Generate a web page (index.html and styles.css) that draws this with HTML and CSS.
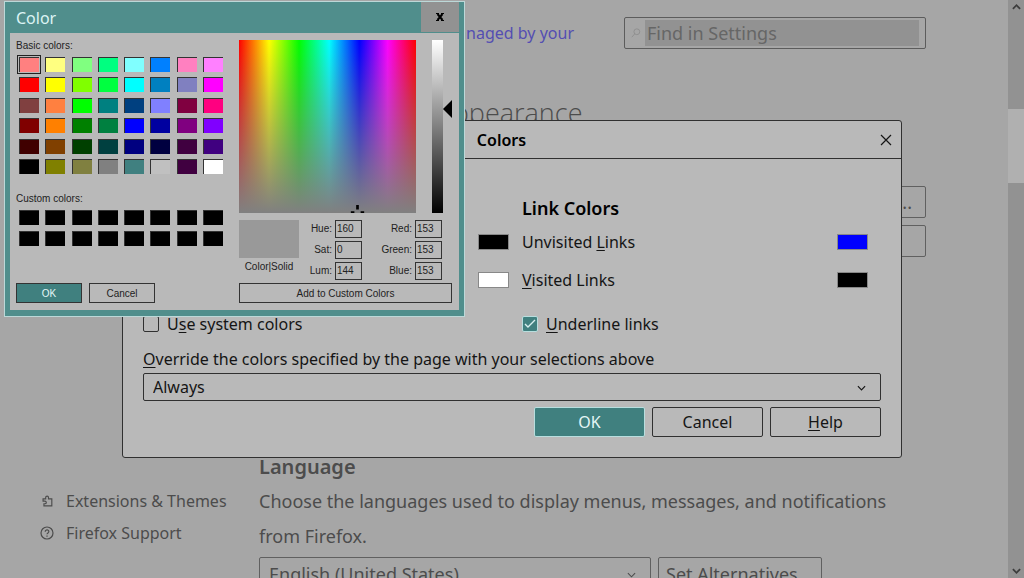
FILE: index.html
```
<!DOCTYPE html>
<html lang="en">
<head>
<meta charset="utf-8">
<title>Settings</title>
<link rel="stylesheet" href="styles.css">
</head>
<body>
<div class="page">
  <nav class="sidebar">
    <a class="nav-link" href="#extensions">
      <svg class="nav-icon" viewBox="0 0 16 16" fill="none" stroke="currentColor" stroke-width="1.3"><path d="M3.500 5.500h3V4a1.600 1.600 0 0 1 3.200 0v1.500h3.800v8H4.500v-2.300h1.200a1.500 1.500 0 0 0 0-3H3.500z"/></svg>
      Extensions &amp; Themes
    </a>
    <a class="nav-link" href="#support">
      <svg class="nav-icon" viewBox="0 0 14 14" fill="none" stroke="currentColor" stroke-width="1.2"><circle cx="7" cy="7" r="6"/><path d="M5.200 5.800c0-2.600 3.800-2.400 3.600-.1-.1 1.300-1.800 1.200-1.800 2.600M7 9.500v1.200"/></svg>
      Firefox Support
    </a>
  </nav>
  <main class="content">
    <div class="top-row">
      <a class="managed" href="#managed">managed by your</a>
      <label class="search">
        <svg class="search-icon" viewBox="0 0 12 12" fill="none" stroke="currentColor"><circle cx="7" cy="4.500" r="3.500"/><path d="M4.500 7 1 11"/></svg>
        <input class="search-input" type="text" placeholder="Find in Settings" aria-label="Find in Settings">
      </label>
    </div>
    <h1 class="page-title">Language and Appearance</h1>
    <div class="side-buttons">
      <button class="flat side-button" type="button">...</button>
      <button class="flat side-button" type="button" aria-label="Manage"></button>
    </div>
    <section class="language">
      <h2 class="language-title">Language</h2>
      <p class="language-text">Choose the languages used to display menus, messages, and notifications from Firefox.</p>
      <div class="language-row">
        <div class="select-wrap language-select">
          <select class="flat select" aria-label="Language"><option>English (United States)</option></select>
          <svg class="chevron" viewBox="0 0 10 6" fill="none" stroke="currentColor" stroke-width="1.2"><path d="m1 1 4 4 4-4"/></svg>
        </div>
        <button class="flat alternatives" type="button">Set Alternatives</button>
      </div>
    </section>
  </main>
  <div class="scrollbar">
    <svg class="scroll-arrow" viewBox="0 0 10 8" fill="none" stroke="currentColor" stroke-width="2"><path d="m1 6 4-4 4 4"/></svg>
    <div class="scroll-track"><div class="scroll-thumb"></div></div>
    <svg class="scroll-arrow" viewBox="0 0 10 8" fill="none" stroke="currentColor" stroke-width="2"><path d="m1 2 4 4 4-4"/></svg>
  </div>
</div>

<div class="overlay">
  <section class="dialog" role="dialog" aria-labelledby="dialog-title">
    <header class="dialog-header">
      <h2 class="dialog-title" id="dialog-title">Colors</h2>
      <button class="dialog-close" type="button" aria-label="Close"><svg viewBox="0 0 12 12" fill="none" stroke="currentColor" stroke-width="1.200"><path d="m1 1 10 10M11 1 1 11"/></svg></button>
    </header>
    <div class="dialog-body">
      <div class="groups">
        <div class="group">
          <div class="group-title"></div>
          <div class="color-row end"><input class="well" type="color" value="#000000" aria-label="Text"></div>
          <div class="color-row end"><input class="well" type="color" value="#ffffff" aria-label="Background"></div>
          <label class="check-row"><input class="check" type="checkbox"><span>U<u>s</u>e system colors</span></label>
        </div>
        <div class="group">
          <h3 class="group-title">Link Colors</h3>
          <div class="color-row"><label for="unvisited">Unvisited <u>L</u>inks</label><input class="well" id="unvisited" type="color" value="#0000ff"></div>
          <div class="color-row"><label for="visited"><u>V</u>isited Links</label><input class="well" id="visited" type="color" value="#000000"></div>
          <label class="check-row"><input class="check" type="checkbox" checked><span><u>U</u>nderline links</span></label>
        </div>
      </div>
      <label class="override" for="override"><u>O</u>verride the colors specified by the page with your selections above</label>
      <div class="select-wrap">
        <select class="flat select dialog-select" id="override"><option>Always</option></select>
        <svg class="chevron" viewBox="0 0 10 6" fill="none" stroke="currentColor" stroke-width="1.300"><path d="m1 1 4 4 4-4"/></svg>
      </div>
      <div class="actions">
        <button class="flat action primary" type="button">OK</button>
        <button class="flat action" type="button">Cancel</button>
        <button class="flat action" type="button"><u>H</u>elp</button>
      </div>
    </div>
  </section>
</div>

<section class="picker" role="dialog" aria-labelledby="picker-title">
  <header class="picker-header">
    <h2 class="picker-title" id="picker-title">Color</h2>
    <button class="picker-close" type="button" aria-label="Close"><svg viewBox="0 0 8 8" fill="none" stroke="currentColor"><path stroke-width="2" d="m1.500 1 5 6M6.500 1l-5 6"/><path d="M0 .5h3M5 .5h3M0 7.500h3M5 7.500h3"/></svg></button>
  </header>
  <div class="picker-body">
    <div class="palette">
      <div class="palette-label">Basic colors:</div>
      <div class="swatches basic" id="basic"></div>
      <div class="palette-label custom-label">Custom colors:</div>
      <div class="swatches custom" id="custom"></div>
      <div class="palette-actions">
        <button class="small-button small-primary" type="button">OK</button>
        <button class="small-button" type="button">Cancel</button>
      </div>
    </div>
    <div class="mixer">
      <div class="mixer-top">
        <div class="spectrum"><svg class="cross" viewBox="0 0 15 9" fill="currentColor"><path d="M6 0h3v5H6zM0 7h4v2H0zM11 7h4v2h-4z"/></svg></div>
        <div class="luminance"></div>
        <svg class="lum-arrow" viewBox="0 0 9 18"><path d="M9 0v18L0 9z"/></svg>
      </div>
      <div class="mixer-values">
        <div class="preview"><div class="preview-color"></div><span>Color|Solid</span></div>
        <div class="fields">
          <label for="hue">Hue:</label><input id="hue" type="text" value="160">
          <label for="sat">Sat:</label><input id="sat" type="text" value="0">
          <label for="lum">Lum:</label><input id="lum" type="text" value="144">
        </div>
        <div class="fields rgb">
          <label for="red">Red:</label><input id="red" type="text" value="153">
          <label for="green">Green:</label><input id="green" type="text" value="153">
          <label for="blue">Blue:</label><input id="blue" type="text" value="153">
        </div>
      </div>
      <button class="small-button" type="button">Add to Custom Colors</button>
    </div>
  </div>
</section>
<script src="palette.js"></script>
</body>
</html>
```

FILE: styles.css
```
* { box-sizing: border-box; }
body {
  margin: 0;
  background: #a6a6a6;
  color: #4c4c4c;
  font-family: "Noto Sans", "Open Sans", sans-serif;
  font-size: 16px;
  overflow: hidden;
}
h1, h2, h3, p { margin: 0; }
svg { display: block; }
button, input, select { font: inherit; color: inherit; }
u { text-underline-offset: 2px; text-decoration-thickness: 1px; }

.page { display: flex; height: 100vh; overflow: hidden; }
.sidebar {
  width: 259px;
  flex: none;
  display: flex;
  flex-direction: column;
  justify-content: flex-end;
  gap: 8px;
  padding: 0 0 33px 40px;
}
.nav-link {
  display: flex;
  align-items: center;
  gap: 12px;
  line-height: 24px;
  color: inherit;
  text-decoration: none;
  white-space: nowrap;
}
.nav-icon { width: 14px; height: 14px; }
.content { flex: 1; min-width: 0; padding: 17px 82px 0 0; }
.top-row { display: flex; justify-content: space-between; }
.managed {
  width: 315px;
  text-align: right;
  line-height: 32px;
  color: #544eb2;
  text-decoration: none;
}
.search {
  width: 302px;
  height: 32px;
  display: flex;
  align-items: center;
  gap: 4px;
  padding: 2px 6px;
  border: 1px solid #5c5c5c;
  border-radius: 2px;
}
.search-icon { width: 10px; height: 12px; color: #8c8c8c; }
.search-input {
  flex: 1;
  min-width: 0;
  height: 26px;
  padding: 0 2px;
  border: 0;
  background: #929292;
  font-size: 18px;
}
.search-input::placeholder { color: #666; opacity: 1; }
.page-title {
  margin-top: 42px;
  font-family: "Open Sans", sans-serif;
  font-size: 27px;
  line-height: 44px;
  font-weight: 300;
}
.flat {
  border: 1px solid #606060;
  border-radius: 2px;
  background: transparent;
}
.side-buttons {
  display: flex;
  flex-direction: column;
  align-items: flex-end;
  gap: 7px;
  margin-top: 51px;
}
.side-button {
  width: 120px;
  height: 32px;
  padding: 0 13px;
  text-align: right;
  font-size: 18px;
  line-height: 28px;
}
.language-title { margin-top: 196px; font-size: 20px; line-height: 28px; font-weight: 600; }
.language-text { margin-top: 3px; font-size: 18px; line-height: 35px; }
.language-row { display: flex; gap: 7px; margin-top: 3px; }
.select-wrap { position: relative; }
.language-select { width: 392px; }
.select {
  display: block;
  width: 100%;
  height: 34px;
  padding: 0 9px;
  appearance: none;
  font-size: 18px;
}
.chevron {
  position: absolute;
  right: 15px;
  top: 50%;
  width: 9px;
  height: 6px;
  margin-top: -2px;
  pointer-events: none;
}
.alternatives { width: 164px; height: 34px; padding: 0 7px; white-space: nowrap; font-size: 18px; text-align: left; }

.scrollbar {
  width: 16px;
  flex: none;
  display: flex;
  flex-direction: column;
  align-items: center;
  padding: 3px 0;
  background: #929292;
  color: #3c3c3c;
}
.scroll-arrow { width: 9px; height: 8px; }
.scroll-track { flex: 1; width: 100%; padding-top: 98px; }
.scroll-thumb { height: 74px; background: #b0b0b0; }

.overlay {
  position: fixed;
  inset: 0;
  display: flex;
  align-items: center;
  justify-content: center;
}
.dialog {
  width: 780px;
  border: 1px solid #303030;
  border-radius: 3px;
  background: #b9b9b9;
  color: #151515;
}
.dialog-header {
  display: flex;
  align-items: center;
  height: 38px;
  padding-right: 9px;
  border-bottom: 1px solid #303030;
}
.dialog-title { flex: 1; font-size: 16px; font-weight: 600; text-align: center; color: #000; }
.dialog-close { width: 12px; height: 12px; padding: 0; border: 0; background: none; }
.dialog-body { padding: 34px 20px 20px; }
.groups { display: grid; grid-template-columns: 1fr 359px; }
.group { padding-right: 13px; }
.group-title { height: 30px; font-size: 18px; line-height: 30px; font-weight: 600; color: #000; }
.color-row { display: flex; align-items: center; justify-content: space-between; height: 38px; }
.color-row.end { justify-content: flex-end; }
.well {
  width: 31px;
  height: 16px;
  padding: 0;
  border: 1px solid #888;
  background: none;
  appearance: none;
}
.well::-webkit-color-swatch-wrapper { padding: 0; }
.well::-webkit-color-swatch { border: 0; }
.check-row { display: flex; align-items: center; gap: 8px; height: 50px; }
.check {
  width: 16px;
  height: 16px;
  margin: 0;
  appearance: none;
  border: 1px solid #303030;
  border-radius: 2px;
}
.check:checked {
  border-color: #b8dede;
  background: #40807f url("data:image/svg+xml,%3Csvg xmlns='http://www.w3.org/2000/svg' viewBox='0 0 14 14' fill='none' stroke='%23d8f0f0' stroke-width='1.400'%3E%3Cpath d='m2 7 3 3 7-7'/%3E%3C/svg%3E") center / 14px;
}
.override { display: block; margin-top: -4px; line-height: 28px; }
.dialog-select { height: 28px; border-color: #303030; font-size: 16px; }
.actions { display: flex; justify-content: flex-end; gap: 7px; margin-top: 6px; }
.action { width: 111px; height: 30px; padding: 0; border-color: #303030; }
.primary { background: #40807f; border-color: #b8dede; color: #e4f6f6; }

.picker {
  position: absolute;
  left: 4px;
  top: 1px;
  width: 461px;
  border: 1px solid #bcd8d8;
  background: #508e8c;
  color: #222;
  padding: 0 5px 6px;
  font-family: "Liberation Sans", Arial, sans-serif;
  font-size: 10px;
}
.picker-header { display: flex; justify-content: space-between; height: 31px; }
.picker-title {
  padding-left: 6px;
  font: 400 16px/32px "Noto Sans", sans-serif;
  color: #dcf4f4;
}
.picker-close { width: 38px; height: 30px; padding: 0; border: 0; background: #929292; color: #000; }
.picker-close svg { width: 8px; height: 8px; margin: 0 auto; }
.picker-body {
  display: flex;
  justify-content: space-between;
  background: #b9b9b9;
  padding: 7px 7px 7px 6px;
}
.palette { width: 207px; display: flex; flex-direction: column; }
.palette-label { line-height: 12px; }
.swatches {
  display: grid;
  grid-template-columns: repeat(8, 20px);
  justify-content: space-between;
  align-content: space-between;
  margin-left: 3px;
}
.basic { height: 117px; margin-top: 5px; }
.custom { height: 36px; margin-top: 5px; }
.custom-label { margin-top: 19px; }
.swatch {
  height: 15px;
  padding: 0;
  border: solid;
  border-width: 1px 0 0 1px;
  border-color: #333;
  border-radius: 0;
}
.swatch.selected { outline: 1px solid #222; outline-offset: 1px; }
.palette-actions { display: flex; gap: 7px; margin-top: auto; }
.small-button {
  height: 20px;
  min-width: 66px;
  padding: 0;
  border: 1px solid #333;
  background: transparent;
}
.small-primary { background: #40807f; color: #e4f6f6; }
.mixer { width: 213px; display: flex; flex-direction: column; }
.mixer-top { display: flex; }
.spectrum {
  position: relative;
  width: 177px;
  height: 173px;
  background:
    linear-gradient(rgba(128, 128, 128, 0), #808080),
    linear-gradient(90deg, #f00, #ff0 17%, #0f0 34%, #0ff 51%, #00f 68%, #f0f 84%, #f00);
}
.cross { position: absolute; left: 111px; bottom: 0; width: 15px; height: 8px; color: #000; }
.luminance { width: 11px; height: 173px; margin-left: 16px; background: linear-gradient(#fff, #808080 50%, #000); }
.lum-arrow { width: 9px; height: 18px; margin-top: 60px; }
.mixer-values { display: flex; margin-top: 7px; }
.preview { width: 60px; text-align: center; }
.preview-color { height: 38px; margin-bottom: 3px; background: #999; }
.fields {
  display: grid;
  grid-template-columns: 33px 27px;
  grid-auto-rows: 18px;
  gap: 3px;
  text-align: right;
  line-height: 18px;
}
.rgb { margin-left: auto; margin-right: 10px; }
.fields input { width: 27px; height: 18px; padding: 0 1px; border: 1px solid #333; background: transparent; }
.mixer .small-button { margin-top: 3px; }
```

FILE: palette.js
```
const basicColors = [
  '#ff8080', '#ffff80', '#80ff80', '#00ff80', '#80ffff', '#0080ff', '#ff80c0', '#ff80ff',
  '#ff0000', '#ffff00', '#80ff00', '#00ff40', '#00ffff', '#0080c0', '#8080c0', '#ff00ff',
  '#804040', '#ff8040', '#00ff00', '#008080', '#004080', '#8080ff', '#800040', '#ff0080',
  '#800000', '#ff8000', '#008000', '#008040', '#0000ff', '#0000a0', '#800080', '#8000ff',
  '#400000', '#804000', '#004000', '#004040', '#000080', '#000040', '#400040', '#400080',
  '#000000', '#808000', '#808040', '#808080', '#408080', '#c0c0c0', '#400040', '#ffffff'
];

function fillPalette(id, colors) {
  const grid = document.getElementById(id);
  for (const color of colors) {
    const swatch = document.createElement('button');
    swatch.type = 'button';
    swatch.className = 'swatch';
    swatch.style.backgroundColor = color;
    swatch.setAttribute('aria-label', color);
    grid.append(swatch);
  }
}

fillPalette('basic', basicColors);
fillPalette('custom', Array(16).fill('#000000'));
document.querySelector('#basic .swatch').classList.add('selected');
```
